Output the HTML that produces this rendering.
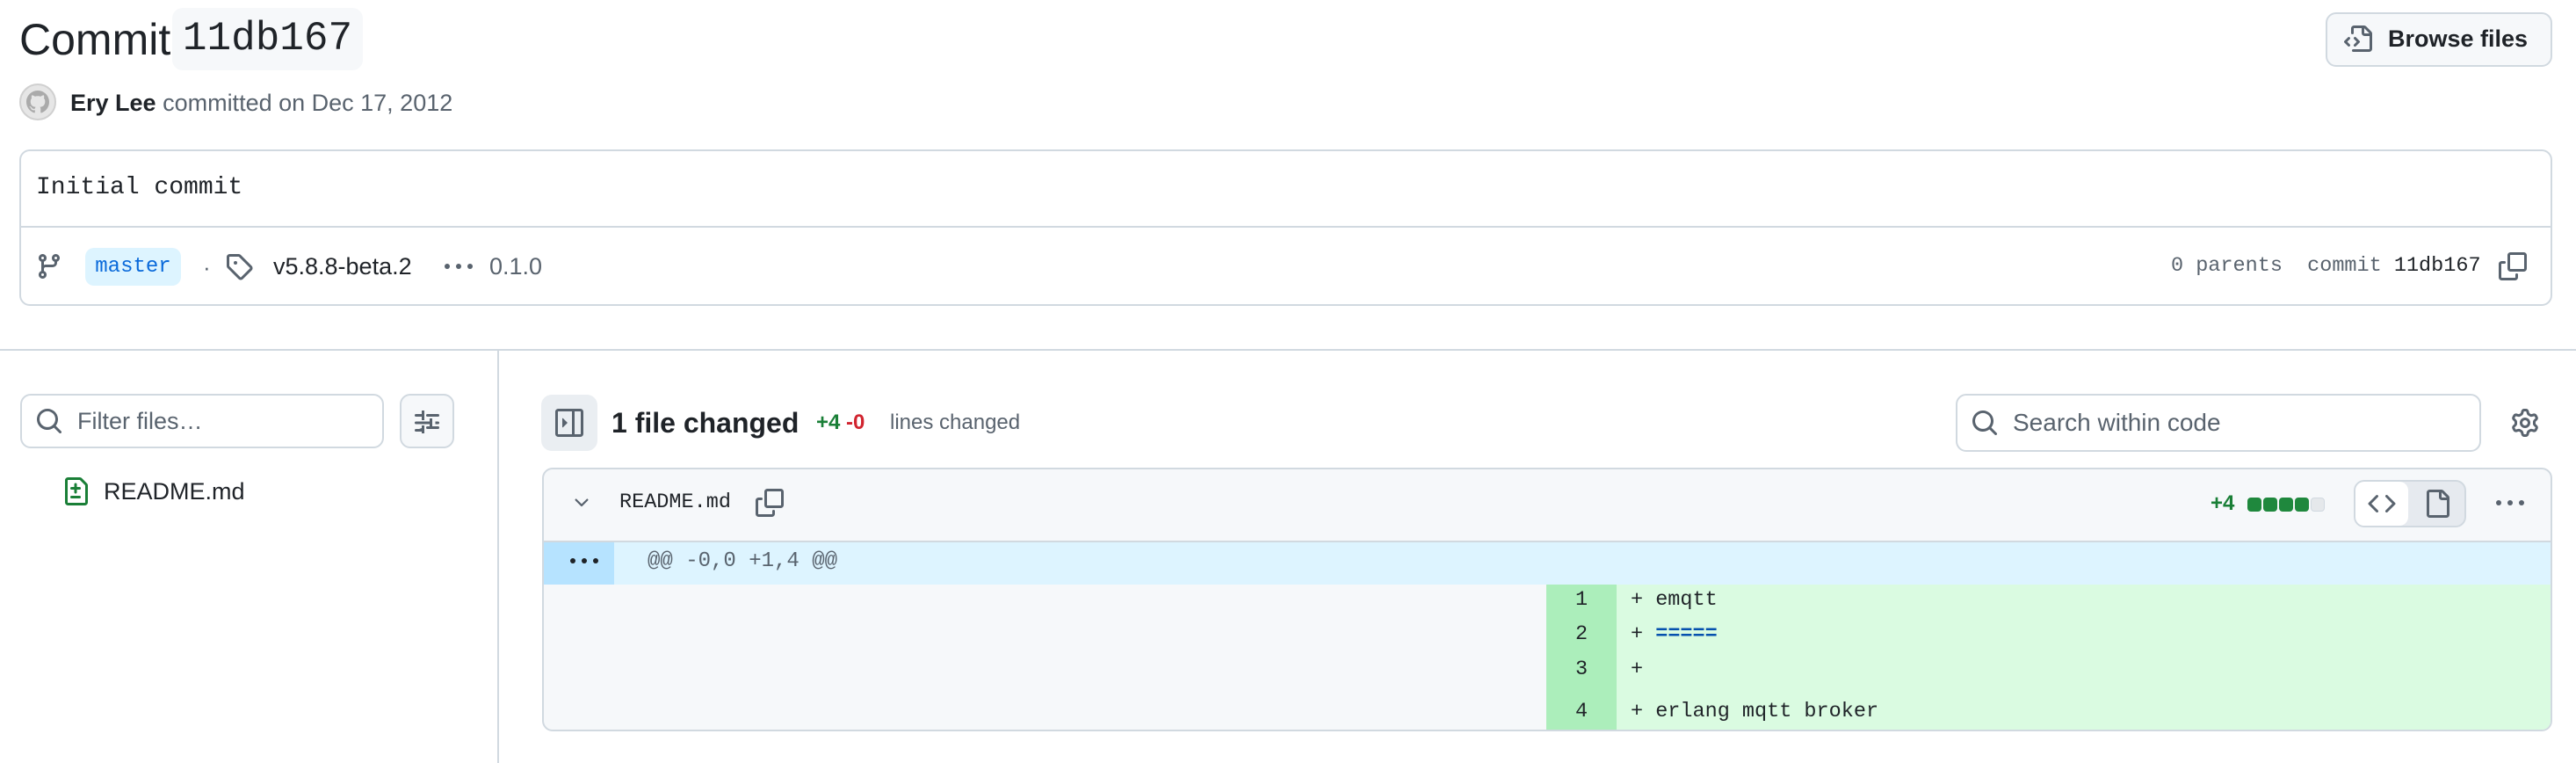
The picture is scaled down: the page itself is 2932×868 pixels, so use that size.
<!DOCTYPE html>
<html><head><meta charset="utf-8"><style>
*{box-sizing:border-box;margin:0;padding:0}
body{width:2932px;height:868px;background:#fff;position:relative;overflow:hidden;font-family:"Liberation Sans",sans-serif;color:#1f2328}
.a{position:absolute}
.mono{font-family:"Liberation Mono",monospace}
svg{position:absolute;display:block}
</style></head><body>

<div class="a" style="left:22px;top:14px;font-size:50px;line-height:62px">Commit</div>
<div class="a mono" style="left:196px;top:9px;width:217px;height:71px;background:#f6f8fa;border-radius:12px;font-size:46px;line-height:71px;text-align:center">11db167</div>

<div class="a" style="left:2647px;top:14px;width:258px;height:62px;border:2px solid #d1d9e0;border-radius:12px;background:#f6f8fa"></div>
<svg style="left:2668px;top:29px" width="32" height="32" viewBox="0 0 16 16" fill="#59636e"><path d="M4 1.75C4 .784 4.784 0 5.75 0h5.586c.464 0 .909.184 1.237.513l2.914 2.914c.329.328.513.773.513 1.237v8.586A1.75 1.75 0 0 1 14.25 15h-9a.75.75 0 0 1 0-1.5h9a.25.25 0 0 0 .25-.25V6h-2.75A1.75 1.75 0 0 1 10 4.25V1.5H5.75a.25.25 0 0 0-.25.25v2.5a.75.75 0 0 1-1.5 0Zm7.5-.188V4.25c0 .138.112.25.25.25h2.688l-.011-.013-2.914-2.914-.013-.011ZM5.72 6.72a.75.75 0 0 0 0 1.06l1.47 1.47-1.47 1.47a.75.75 0 1 0 1.06 1.06l2-2a.75.75 0 0 0 0-1.060l-2-2a.75.75 0 0 0-1.060 0ZM3.28 7.78a.75.75 0 0 0-1.060-1.060l-2 2a.75.75 0 0 0 0 1.060l2 2a.75.75 0 0 0 1.060-1.060L1.81 9.25l1.47-1.47Z"/></svg>
<div class="a" style="left:2718px;top:24px;font-size:27px;line-height:40px;font-weight:bold;color:#1f2328">Browse files</div>

<div class="a" style="left:22px;top:95px;width:42px;height:42px;border-radius:50%;background:#e6e6e6;border:2px solid #d0d0d0"></div>
<svg style="left:30px;top:103px" width="26" height="26" viewBox="0 0 16 16" fill="#aaa"><path d="M8 0c4.42 0 8 3.58 8 8a8.013 8.013 0 0 1-5.45 7.59c-.4.08-.55-.17-.55-.38 0-.27.01-1.13.01-2.2 0-.75-.25-1.23-.54-1.48 1.78-.2 3.65-.88 3.65-3.95 0-.88-.31-1.59-.82-2.15.08-.2.36-1.02-.08-2.12 0 0-.67-.22-2.2.82-.64-.18-1.32-.27-2-.27-.68 0-1.36.09-2 .27-1.53-1.03-2.2-.82-2.2-.82-.44 1.1-.16 1.92-.08 2.12-.51.56-.82 1.28-.82 2.15 0 3.06 1.86 3.75 3.64 3.95-.23.2-.44.55-.51 1.07-.46.21-1.61.55-2.33-.66-.15-.24-.6-.83-1.23-.82-.67.01-.27.38.01.53.34.19.73.9.82 1.13.16.45.68 1.31 2.69.94 0 .67.01 1.3.01 1.49 0 .21-.15.45-.55.38A7.995 7.995 0 0 1 0 8c0-4.42 3.58-8 8-8Z"/></svg>
<div class="a" style="left:80px;top:99px;font-size:27px;line-height:36px;color:#59636e"><b style="color:#1f2328">Ery Lee</b> committed on Dec 17, 2012</div>

<div class="a" style="left:22px;top:170px;width:2883px;height:178px;border:2px solid #d1d9e0;border-radius:12px"></div>
<div class="a" style="left:24px;top:257px;width:2879px;height:2px;background:#d1d9e0"></div>
<div class="a mono" style="left:41px;top:196px;font-size:28px;line-height:36px">Initial commit</div>

<svg style="left:40px;top:287px" width="32" height="32" viewBox="0 0 16 16" fill="#59636e"><path d="M9.5 3.25a2.25 2.25 0 1 1 3 2.122V6A2.5 2.5 0 0 1 10 8.5H6a1 1 0 0 0-1 1v1.128a2.251 2.251 0 1 1-1.5 0V5.372a2.25 2.25 0 1 1 1.5 0v1.836A2.493 2.493 0 0 1 6 7h4a1 1 0 0 0 1-1v-.628A2.25 2.25 0 0 1 9.5 3.25Zm-6 0a.75.75 0 1 0 1.5 0 .75.75 0 0 0-1.5 0Zm8.25-.75a.75.75 0 1 0 0 1.5.75.75 0 0 0 0-1.5ZM4.25 12a.75.75 0 1 0 0 1.5.75.75 0 0 0 0-1.5Z"/></svg>
<div class="a mono" style="left:97px;top:282px;width:109px;height:43px;background:#ddf4ff;border-radius:10px;color:#0969da;font-size:24px;line-height:43px;text-align:center">master</div>
<div class="a" style="left:231px;top:286px;font-size:26px;line-height:36px;color:#59636e">·</div>
<svg style="left:256px;top:287px" width="32" height="32" viewBox="0 0 16 16" fill="#59636e"><path d="M1 7.775V2.75C1 1.784 1.784 1 2.75 1h5.025c.464 0 .91.184 1.238.513l6.25 6.25a1.75 1.75 0 0 1 0 2.474l-5.026 5.026a1.75 1.75 0 0 1-2.474 0l-6.25-6.25A1.752 1.752 0 0 1 1 7.775Zm1.5 0c0 .066.026.13.073.177l6.25 6.25a.25.25 0 0 0 .354 0l5.025-5.025a.25.25 0 0 0 0-.354l-6.25-6.25a.25.25 0 0 0-.177-.073H2.75a.25.25 0 0 0-.25.25ZM6 5a1 1 0 1 1 0 2 1 1 0 0 1 0-2Z"/></svg>
<div class="a" style="left:311px;top:285px;font-size:27px;line-height:36px">v5.8.8-beta.2</div>
<svg style="left:505px;top:298px" width="34" height="10" viewBox="0 0 34 10" fill="#59636e"><circle cx="4" cy="5" r="3"/><circle cx="17" cy="5" r="3"/><circle cx="30" cy="5" r="3"/></svg>
<div class="a" style="left:557px;top:285px;font-size:27px;line-height:36px;color:#59636e">0.1.0</div>

<div class="a mono" style="left:2471px;top:286px;font-size:23.5px;line-height:34px;color:#59636e">0 parents&nbsp;&nbsp;commit <span style="color:#1f2328">11db167</span></div>
<svg style="left:2844px;top:287px" width="32" height="32" viewBox="0 0 16 16" fill="#59636e"><path d="M0 6.75C0 5.784.784 5 1.75 5h1.5a.75.75 0 0 1 0 1.5h-1.5a.25.25 0 0 0-.25.25v7.5c0 .138.112.25.25.25h7.5a.25.25 0 0 0 .25-.25v-1.5a.75.75 0 0 1 1.5 0v1.5A1.75 1.75 0 0 1 9.25 16h-7.5A1.75 1.75 0 0 1 0 14.25ZM5 1.75C5 .784 5.784 0 6.75 0h7.5C15.216 0 16 .784 16 1.75v7.5A1.75 1.75 0 0 1 14.25 11h-7.5A1.75 1.75 0 0 1 5 9.25Zm1.75-.25a.25.25 0 0 0-.25.25v7.5c0 .138.112.25.25.25h7.5a.25.25 0 0 0 .25-.25v-7.5a.25.25 0 0 0-.25-.25Z"/></svg>

<div class="a" style="left:0;top:397px;width:2932px;height:2px;background:#d1d9e0"></div>
<div class="a" style="left:566px;top:399px;width:2px;height:469px;background:#d1d9e0"></div>

<div class="a" style="left:23px;top:448px;width:414px;height:62px;border:2px solid #d1d9e0;border-radius:12px"></div>
<svg style="left:40px;top:463px" width="32" height="32" viewBox="0 0 16 16" fill="#59636e"><path d="M10.68 11.74a6 6 0 0 1-7.922-8.982 6 6 0 0 1 8.982 7.922l3.04 3.04a.749.749 0 0 1-.326 1.275.749.749 0 0 1-.734-.215ZM11.5 7a4.499 4.499 0 1 0-8.997 0A4.499 4.499 0 0 0 11.5 7Z"/></svg>
<div class="a" style="left:88px;top:461px;font-size:27px;line-height:36px;color:#59636e">Filter files…</div>
<div class="a" style="left:455px;top:448px;width:62px;height:62px;border:2px solid #d1d9e0;border-radius:12px;background:#f6f8fa"></div>
<svg style="left:470px;top:463px" width="32" height="32" viewBox="0 0 16 16" fill="#59636e"><path d="M5 2v2H1.75a.75.75 0 0 0 0 1.5H5v2h1.5V2Zm3.25 2a.75.75 0 0 0 0 1.5h6a.75.75 0 0 0 0-1.5ZM11 6.5V12h-1.5V9.75H1.75a.75.75 0 0 1 0-1.5H9.5V6.5Zm1.75 1.75h1.5a.75.75 0 0 1 0 1.5h-1.5ZM5 12v2H1.75a.75.75 0 0 1 0-1.5H3.5Zm0-1.5h1.5V15H5v-1.5Zm3.25.5h6a.75.75 0 0 1 0 1.5h-6a.75.75 0 0 1 0-1.5Z"/></svg>

<svg style="left:70px;top:543px" width="32" height="32" viewBox="0 0 16 16" fill="#1a7f37"><path d="M2 1.75C2 .784 2.784 0 3.75 0h6.586c.464 0 .909.184 1.237.513l2.914 2.914c.329.328.513.773.513 1.237v9.586A1.75 1.75 0 0 1 13.25 16h-9.5A1.75 1.75 0 0 1 2 14.25Zm1.75-.25a.25.25 0 0 0-.25.25v12.5c0 .138.112.25.25.25h9.5a.25.25 0 0 0 .25-.25V4.664a.25.25 0 0 0-.073-.177l-2.914-2.914a.25.25 0 0 0-.177-.073ZM8 3.25a.75.75 0 0 1 .75.75v1.5h1.5a.75.75 0 0 1 0 1.5h-1.5v1.5a.75.75 0 0 1-1.5 0V7h-1.5a.75.75 0 0 1 0-1.5h1.5V4A.75.75 0 0 1 8 3.25Zm-3 8a.75.75 0 0 1 .75-.75h4.5a.75.75 0 0 1 0 1.5h-4.5a.75.75 0 0 1-.75-.75Z"/></svg>
<div class="a" style="left:118px;top:541px;font-size:27px;line-height:36px">README.md</div>

<div class="a" style="left:616px;top:449px;width:64px;height:64px;border-radius:12px;background:#eaeef2"></div>
<svg style="left:632px;top:465px" width="32" height="32" viewBox="0 0 16 16" fill="#59636e"><path d="M6.823 7.823a.25.25 0 0 1 0 .354l-2.396 2.396A.25.25 0 0 1 4 10.396V5.604a.25.25 0 0 1 .427-.177Z"/><path d="M1.75 0h12.5C15.216 0 16 .784 16 1.75v12.5A1.75 1.75 0 0 1 14.25 16H1.75A1.75 1.75 0 0 1 0 14.25V1.75C0 .784.784 0 1.75 0ZM1.5 1.75v12.5c0 .138.112.25.25.25H9.5v-13H1.75a.25.25 0 0 0-.25.25ZM11 14.5h3.25a.25.25 0 0 0 .25-.25V1.75a.25.25 0 0 0-.25-.25H11Z"/></svg>
<div class="a" style="left:696px;top:460px;font-size:32px;line-height:42px;font-weight:bold">1 file changed</div>
<div class="a" style="left:929px;top:464px;font-size:24px;line-height:34px;font-weight:bold;color:#1a7f37">+4 <span style="color:#d1242f">-0</span></div>
<div class="a" style="left:1013px;top:464px;font-size:24px;line-height:34px;color:#59636e">lines changed</div>

<div class="a" style="left:2226px;top:448px;width:598px;height:66px;border:2px solid #d1d9e0;border-radius:12px"></div>
<svg style="left:2243px;top:465px" width="32" height="32" viewBox="0 0 16 16" fill="#59636e"><path d="M10.68 11.74a6 6 0 0 1-7.922-8.982 6 6 0 0 1 8.982 7.922l3.04 3.04a.749.749 0 0 1-.326 1.275.749.749 0 0 1-.734-.215ZM11.5 7a4.499 4.499 0 1 0-8.997 0A4.499 4.499 0 0 0 11.5 7Z"/></svg>
<div class="a" style="left:2291px;top:463px;font-size:28px;line-height:36px;color:#59636e">Search within code</div>
<svg style="left:2858px;top:465px" width="32" height="32" viewBox="0 0 16 16" fill="#59636e"><path d="M8 0a8.2 8.2 0 0 1 .701.031C9.444.095 9.99.645 10.16 1.29l.288 1.107c.018.066.079.158.212.224.231.114.454.243.668.386.123.082.233.09.299.071l1.103-.303c.644-.176 1.392.021 1.82.63.27.385.506.792.704 1.218.315.675.111 1.422-.364 1.891l-.814.806c-.049.048-.098.147-.088.294.016.257.016.515 0 .772-.01.147.038.246.088.294l.814.806c.475.469.679 1.216.364 1.891a7.977 7.977 0 0 1-.704 1.217c-.428.61-1.176.807-1.82.63l-1.102-.302c-.067-.019-.177-.011-.3.071a5.909 5.909 0 0 1-.668.386c-.133.066-.194.158-.211.224l-.29 1.106c-.168.646-.715 1.196-1.458 1.26a8.006 8.006 0 0 1-1.402 0c-.743-.064-1.289-.614-1.458-1.26l-.289-1.106c-.018-.066-.079-.158-.212-.224a5.738 5.738 0 0 1-.668-.386c-.123-.082-.233-.09-.299-.071l-1.103.303c-.644.176-1.392-.021-1.82-.63a8.12 8.12 0 0 1-.704-1.218c-.315-.675-.111-1.422.363-1.891l.815-.806c.05-.048.098-.147.088-.294a6.214 6.214 0 0 1 0-.772c.01-.147-.038-.246-.088-.294l-.815-.806C.635 6.045.431 5.298.746 4.623a7.92 7.92 0 0 1 .704-1.217c.428-.61 1.176-.807 1.82-.63l1.102.302c.067.019.177.011.3-.071.214-.143.437-.272.668-.386.133-.066.194-.158.211-.224l.29-1.106C6.009.645 6.556.095 7.299.03 7.53.01 7.764 0 8 0Zm-.571 1.525c-.036.003-.108.036-.137.146l-.289 1.105c-.147.561-.549.967-.998 1.189-.173.086-.34.183-.5.29-.417.278-.97.423-1.529.27l-1.103-.303c-.109-.03-.175.016-.195.045-.22.312-.412.644-.573.99-.014.031-.021.11.059.19l.815.806c.411.406.562.957.53 1.456a4.709 4.709 0 0 0 0 .582c.032.499-.119 1.05-.53 1.456l-.815.806c-.081.08-.073.159-.059.19.162.346.353.677.573.989.02.03.085.076.195.046l1.102-.303c.56-.153 1.113-.008 1.53.27.161.107.328.204.501.29.447.222.85.629.997 1.189l.289 1.105c.029.109.101.143.137.146a6.6 6.6 0 0 0 1.142 0c.036-.003.108-.036.137-.146l.289-1.105c.147-.561.549-.967.998-1.189.173-.086.34-.183.5-.29.417-.278.97-.423 1.529-.27l1.103.303c.109.029.175-.016.195-.045.22-.313.411-.644.573-.99.014-.031.021-.11-.059-.19l-.815-.806c-.411-.406-.562-.957-.53-1.456a4.709 4.709 0 0 0 0-.582c-.032-.499.119-1.05.53-1.456l.815-.806c.081-.08.073-.159.059-.19a6.464 6.464 0 0 0-.573-.989c-.02-.03-.085-.076-.195-.046l-1.102.303c-.56.153-1.113.008-1.53-.27a4.44 4.44 0 0 0-.501-.29c-.447-.222-.85-.629-.997-1.189l-.289-1.105c-.029-.11-.101-.143-.137-.146a6.6 6.6 0 0 0-1.142 0ZM11 8a3 3 0 1 1-6 0 3 3 0 0 1 6 0ZM9.5 8a1.5 1.5 0 1 0-3.001.001A1.5 1.5 0 0 0 9.5 8Z"/></svg>

<div class="a" style="left:617px;top:532px;width:2288px;height:300px;border:2px solid #d1d9e0;border-radius:12px;overflow:hidden;background:#f6f8fa">
  <div class="a" style="left:0;top:81px;width:2284px;height:2px;background:#d1d9e0"></div>
  <div class="a" style="left:0;top:83px;width:2284px;height:48px;background:#ddf4ff"></div>
  <div class="a" style="left:0;top:83px;width:80px;height:48px;background:#b6e3ff"></div>
  <div class="a" style="left:1141px;top:131px;width:80px;height:170px;background:#aceebb"></div>
  <div class="a" style="left:1221px;top:131px;width:1063px;height:170px;background:#dafbe1"></div>
</div>
<svg style="left:650px;top:560px" width="24" height="24" viewBox="0 0 16 16" fill="#59636e"><path d="M12.78 5.22a.749.749 0 0 1 0 1.06l-4.25 4.25a.749.749 0 0 1-1.06 0L3.22 6.28a.749.749 0 1 1 1.06-1.06L8 8.939l3.72-3.719a.749.749 0 0 1 1.06 0Z"/></svg>
<div class="a mono" style="left:705px;top:555px;font-size:23.5px;line-height:34px">README.md</div>
<svg style="left:860px;top:556px" width="32" height="32" viewBox="0 0 16 16" fill="#59636e"><path d="M0 6.75C0 5.784.784 5 1.75 5h1.5a.75.75 0 0 1 0 1.5h-1.5a.25.25 0 0 0-.25.25v7.5c0 .138.112.25.25.25h7.5a.25.25 0 0 0 .25-.25v-1.5a.75.75 0 0 1 1.5 0v1.5A1.75 1.75 0 0 1 9.25 16h-7.5A1.75 1.75 0 0 1 0 14.25ZM5 1.75C5 .784 5.784 0 6.75 0h7.5C15.216 0 16 .784 16 1.75v7.5A1.75 1.75 0 0 1 14.25 11h-7.5A1.75 1.75 0 0 1 5 9.25Zm1.75-.25a.25.25 0 0 0-.25.25v7.5c0 .138.112.25.25.25h7.5a.25.25 0 0 0 .25-.25v-7.5a.25.25 0 0 0-.25-.25Z"/></svg>

<div class="a" style="left:2516px;top:556px;font-size:24px;line-height:34px;font-weight:bold;color:#1a7f37">+4</div>
<div class="a" style="left:2558px;top:566px;width:16px;height:16px;border-radius:4px;background:#1f883d"></div>
<div class="a" style="left:2576px;top:566px;width:16px;height:16px;border-radius:4px;background:#1f883d"></div>
<div class="a" style="left:2594px;top:566px;width:16px;height:16px;border-radius:4px;background:#1f883d"></div>
<div class="a" style="left:2612px;top:566px;width:16px;height:16px;border-radius:4px;background:#1f883d"></div>
<div class="a" style="left:2630px;top:566px;width:16px;height:16px;border-radius:4px;background:#e5e8eb;border:1px solid #d1d9e0"></div>
<div class="a" style="left:2679px;top:546px;width:128px;height:54px;border-radius:12px;background:#e6eaef;border:2px solid #d1d9e0"></div>
<div class="a" style="left:2681px;top:548px;width:60px;height:50px;border-radius:10px;background:#fff"></div>
<svg style="left:2695px;top:557px" width="32" height="32" viewBox="0 0 16 16" fill="#59636e"><path d="m11.28 3.22 4.25 4.25a.75.75 0 0 1 0 1.06l-4.25 4.25a.749.749 0 0 1-1.275-.326.749.749 0 0 1 .215-.734L13.94 8l-3.72-3.72a.749.749 0 0 1 .326-1.275.749.749 0 0 1 .734.215Zm-6.56 0a.751.751 0 0 1 1.042.018.751.751 0 0 1 .018 1.042L2.06 8l3.72 3.72a.749.749 0 0 1-.326 1.275.749.749 0 0 1-.734-.215L.47 8.53a.75.75 0 0 1 0-1.06Z"/></svg>
<svg style="left:2758px;top:557px" width="32" height="32" viewBox="0 0 16 16" fill="#59636e"><path d="M2 1.75C2 .784 2.784 0 3.75 0h6.586c.464 0 .909.184 1.237.513l2.914 2.914c.329.328.513.773.513 1.237v9.586A1.75 1.75 0 0 1 13.25 16h-9.5A1.75 1.75 0 0 1 2 14.25Zm1.75-.25a.25.25 0 0 0-.25.25v12.5c0 .138.112.25.25.25h9.5a.25.25 0 0 0 .25-.25V6h-2.75A1.75 1.75 0 0 1 9 4.25V1.5Zm6.75.062V4.25c0 .138.112.25.25.25h2.688l-.011-.013-2.914-2.914-.013-.011Z"/></svg>
<svg style="left:2840px;top:566px" width="34" height="12" viewBox="0 0 34 12" fill="#59636e"><circle cx="4" cy="6" r="3"/><circle cx="17" cy="6" r="3"/><circle cx="30" cy="6" r="3"/></svg>

<svg style="left:648px;top:632px" width="34" height="12" viewBox="0 0 34 12" fill="#1f2328"><circle cx="4" cy="6" r="3"/><circle cx="17" cy="6" r="3"/><circle cx="30" cy="6" r="3"/></svg>
<div class="a mono" style="left:737px;top:622px;font-size:24px;line-height:34px;color:#59636e">@@ -0,0 +1,4 @@</div>

<div class="a mono" style="left:1760px;top:666px;width:80px;text-align:center;font-size:23.5px;line-height:34px">1</div>
<div class="a mono" style="left:1760px;top:705px;width:80px;text-align:center;font-size:23.5px;line-height:34px">2</div>
<div class="a mono" style="left:1760px;top:745px;width:80px;text-align:center;font-size:23.5px;line-height:34px">3</div>
<div class="a mono" style="left:1760px;top:793px;width:80px;text-align:center;font-size:23.5px;line-height:34px">4</div>
<div class="a mono" style="left:1856px;top:666px;font-size:23.5px;line-height:34px">+ emqtt</div>
<div class="a mono" style="left:1856px;top:705px;font-size:23.5px;line-height:34px">+ <span style="color:#0550ae;font-weight:bold">=====</span></div>
<div class="a mono" style="left:1856px;top:745px;font-size:23.5px;line-height:34px">+</div>
<div class="a mono" style="left:1856px;top:793px;font-size:23.5px;line-height:34px">+ erlang mqtt broker</div>

</body></html>
